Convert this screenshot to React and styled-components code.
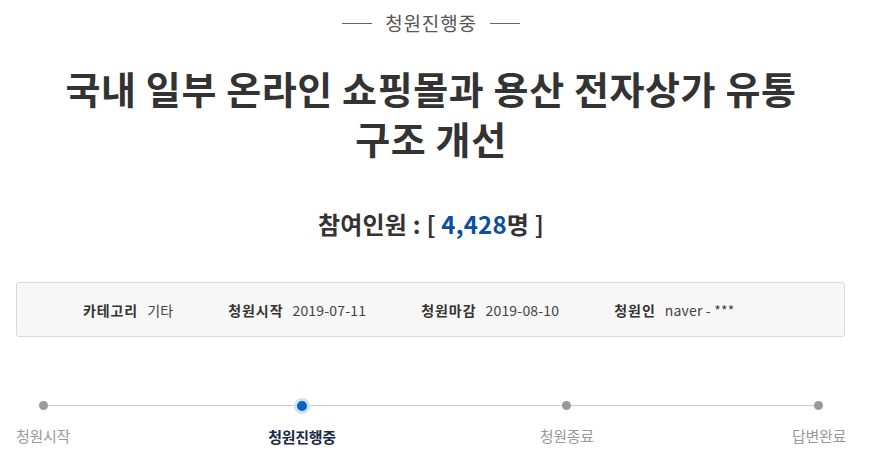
import React from 'react'
import styled, { createGlobalStyle } from 'styled-components'

const GlobalStyle = createGlobalStyle`
  body {
    margin: 0;
    background: #fff;
    font-family: "Noto Sans CJK KR", "Noto Sans", sans-serif;
    color: #333;
  }
`

const Page = styled.div`
  width: 830px;
  margin-left: 16px;
  padding-top: 9px;
`

const Status = styled.div`
  display: flex;
  justify-content: center;
  align-items: center;
  gap: 13px;
  font-size: 19px;
  line-height: 28px;
  letter-spacing: 0.8px;
  color: #555;
  &::before,
  &::after {
    content: "";
    width: 30px;
    height: 1px;
    background: #666;
  }
`

const Title = styled.h1`
  margin: 26px 0 0;
  text-align: center;
  font-size: 38px;
  font-weight: 700;
  line-height: 50px;
  letter-spacing: 0.6px;
  color: #333;
`

const Count = styled.p`
  margin: 46px 0 0;
  text-align: center;
  font-size: 24px;
  font-weight: 700;
  line-height: 30px;
  letter-spacing: 0.2px;
  color: #333;
  strong {
    color: #0b4ea2;
    font-weight: 700;
  }
`

const InfoBox = styled.div`
  margin-top: 43px;
  display: flex;
  align-items: center;
  gap: 55px;
  padding-left: 66px;
  background: #f7f7f7;
  border: 1px solid #d9d9d9;
  border-radius: 3px;
  box-sizing: border-box;
  width: 829px;
  height: 55px;
`

const InfoItem = styled.div`
  display: flex;
  align-items: center;
  gap: 9px;
  font-size: 14px;
  color: #444;
  b {
    font-weight: 700;
    color: #333;
    letter-spacing: 0.9px;
  }
  span {
    letter-spacing: 0.2px;
  }
`

const Steps = styled.div`
  position: relative;
  margin-top: 61px;
  display: flex;
  justify-content: space-between;
  &::before {
    content: "";
    position: absolute;
    left: 26px;
    right: 28px;
    top: 7px;
    height: 1px;
    background: #ccc;
  }
`

const Step = styled.div`
  position: relative;
  display: flex;
  flex-direction: column;
  align-items: center;
  gap: 15px;
  margin-right: ${({ $shift }) => $shift || 0}px;
`

const Dot = styled.span`
  width: ${({ $active }) => ($active ? '10px' : '9px')};
  height: ${({ $active }) => ($active ? '10px' : '9px')};
  margin-top: 3px;
  border-radius: 50%;
  background: ${({ $active }) => ($active ? '#0a62c4' : '#999')};
  box-shadow: ${({ $active }) => ($active ? '0 0 0 3px #cfe3fa' : 'none')};
`

const StepLabel = styled.span`
  font-size: 15px;
  line-height: 22px;
  letter-spacing: -0.3px;
  color: ${({ $active }) => ($active ? '#1b2a47' : '#999')};
  font-weight: ${({ $active }) => ($active ? 700 : 400)};
`

const info = [
  ['카테고리', '기타'],
  ['청원시작', '2019-07-11'],
  ['청원마감', '2019-08-10'],
  ['청원인', 'naver - ***'],
]

const steps = ['청원시작', '청원진행중', '청원종료', '답변완료']

export default function App() {
  return (
    <>
      <GlobalStyle />
      <Page>
        <Status>청원진행중</Status>
        <Title>
          국내 일부 온라인 쇼핑몰과 용산 전자상가 유통
          <br />
          구조 개선
        </Title>
        <Count>
          참여인원 : [ <strong>4,428</strong>명 ]
        </Count>
        <InfoBox>
          {info.map(([k, v]) => (
            <InfoItem key={k}>
              <b>{k}</b>
              <span>{v}</span>
            </InfoItem>
          ))}
        </InfoBox>
        <Steps>
          {steps.map((s, i) => (
            <Step key={s} $shift={i === 1 ? 6 : 0}>
              <Dot $active={i === 1} />
              <StepLabel $active={i === 1}>{s}</StepLabel>
            </Step>
          ))}
        </Steps>
      </Page>
    </>
  )
}
